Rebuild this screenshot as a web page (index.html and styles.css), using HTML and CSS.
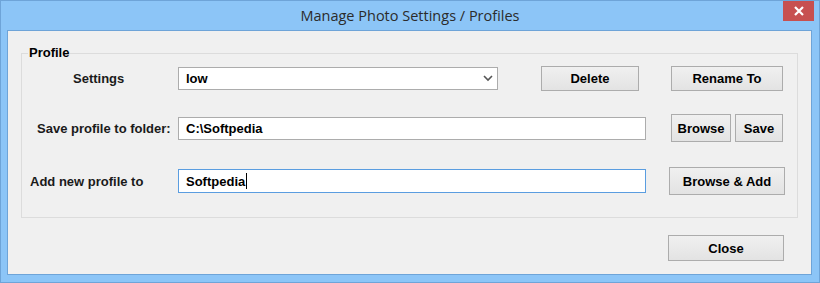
FILE: index.html
```html
<!DOCTYPE html>
<html>
  <head>
    <link rel="stylesheet" href="styles.css">
  </head>
  <body>
    <div class="window">
      <div class="title-bar">
        <span></span>
        <div class="title">Manage Photo Settings / Profiles</div>
        <button class="close-x">
          <svg width="12" height="10" viewBox="0 0 12 10">
            <path d="M2 1 L10 9 M10 1 L2 9" stroke="#fff" stroke-width="2.2" />
          </svg>
        </button>
      </div>

      <div class="client">
        <fieldset class="group">
          <legend>Profile</legend>

          <div class="row row-settings">
            <label class="lbl lbl-settings">Settings</label>
            <div class="select">
              <span>low</span>
              <svg width="10" height="7" viewBox="0 0 10 7">
                <path d="M1 1 L5 5 L9 1" fill="none" stroke="#555" stroke-width="1.6" />
              </svg>
            </div>
            <button class="btn btn-delete">Delete</button>
            <button class="btn btn-rename">Rename To</button>
          </div>

          <div class="row row-save">
            <label class="lbl lbl-save">Save profile to folder:</label>
            <div class="field field-save">C:\Softpedia</div>
            <div class="pair">
              <button class="btn btn-browse">Browse</button>
              <button class="btn btn-save">Save</button>
            </div>
          </div>

          <div class="row row-add">
            <label class="lbl lbl-add">Add new profile to</label>
            <div class="field field-add">Softpedia<span class="caret"></span></div>
            <button class="btn btn-add">Browse &amp; Add</button>
          </div>
        </fieldset>

        <div class="footer">
          <button class="btn btn-close">Close</button>
        </div>
      </div>
    </div>
  </body>
</html>
```

FILE: styles.css
```css
html,
body {
  margin: 0;
  padding: 0;
}

body {
  width: 820px;
  height: 283px;
  overflow: hidden;
  font-family: "Liberation Sans", Arial, sans-serif;
}

.window {
  box-sizing: border-box;
  width: 820px;
  height: 283px;
  background: #8cc5f7;
  border: 1px solid #6ea4d8;
  display: flex;
  flex-direction: column;
}

.title-bar {
  height: 29px;
  display: grid;
  grid-template-columns: 1fr auto 1fr;
  align-items: start;
}

.title {
  font-family: "Open Sans", "Noto Sans", sans-serif;
  font-size: 14.5px;
  color: #2b2b2b;
  line-height: 29px;
}

.close-x {
  justify-self: end;
  margin-right: 5px;
  width: 31px;
  height: 20px;
  padding: 0;
  border: none;
  background: #c75050;
  display: flex;
  align-items: center;
  justify-content: center;
}

.client {
  margin: 0 7px 7px 6px;
  flex: 1;
  background: #f0f0f0;
  border: 1px solid #6ea4d8;
  padding: 0 13px;
  display: flex;
  flex-direction: column;
}

/* group box */
.group {
  margin: 15px 0 0 0;
  padding: 0 0 22px 0;
  border: 1px solid #dcdcdc;
}

.group legend {
  font-weight: bold;
  font-size: 13px;
  color: #000;
  padding: 0 1px;
  margin-left: 6px;
  line-height: 14px;
}

.row {
  display: flex;
  align-items: center;
}

.lbl {
  font-weight: bold;
  font-size: 13px;
  color: #1a1a1a;
}

.row-settings {
  margin-top: 6px;
  height: 25px;
}

.lbl-settings {
  margin-left: 51px;
  width: 105px;
}

.select {
  box-sizing: border-box;
  width: 320px;
  height: 23px;
  background: #fff;
  border: 1px solid #acacac;
  display: flex;
  align-items: center;
  justify-content: space-between;
  padding: 0 4px 0 7px;
  font-weight: bold;
  font-size: 13px;
}

.field {
  box-sizing: border-box;
  width: 468px;
  height: 23px;
  background: #fff;
  border: 1px solid #acacac;
  display: flex;
  align-items: center;
  padding-left: 7px;
  font-weight: bold;
  font-size: 13px;
  color: #000;
}

.field-add {
  height: 24px;
  border-color: #5a9de0;
}

.caret {
  display: inline-block;
  width: 1px;
  height: 16px;
  background: #000;
  margin-left: 1px;
}

.btn {
  box-sizing: border-box;
  font-family: "Liberation Sans", Arial, sans-serif;
  font-weight: bold;
  font-size: 13px;
  color: #000;
  background: linear-gradient(#f0f0f0, #e3e3e3);
  border: 1px solid #acacac;
  padding: 0;
}

.btn-delete {
  margin-left: 43px;
  width: 98px;
  height: 25px;
}

.btn-rename {
  margin-left: 32px;
  width: 112px;
  height: 25px;
}

.row-save {
  margin-top: 23px;
  height: 28px;
}

.lbl-save {
  margin-left: 15px;
  width: 141px;
}

.pair {
  display: flex;
  gap: 4px;
  margin-left: 25px;
}

.btn-browse {
  width: 60px;
  height: 28px;
}

.btn-save {
  width: 48px;
  height: 28px;
}

.row-add {
  margin-top: 25px;
  height: 28px;
}

.lbl-add {
  margin-left: 8px;
  width: 148px;
}

.btn-add {
  margin-left: 23px;
  width: 116px;
  height: 28px;
}

.footer {
  display: flex;
  justify-content: flex-end;
  margin-top: 17px;
  padding-right: 14px;
}

.btn-close {
  width: 116px;
  height: 26px;
}
```
